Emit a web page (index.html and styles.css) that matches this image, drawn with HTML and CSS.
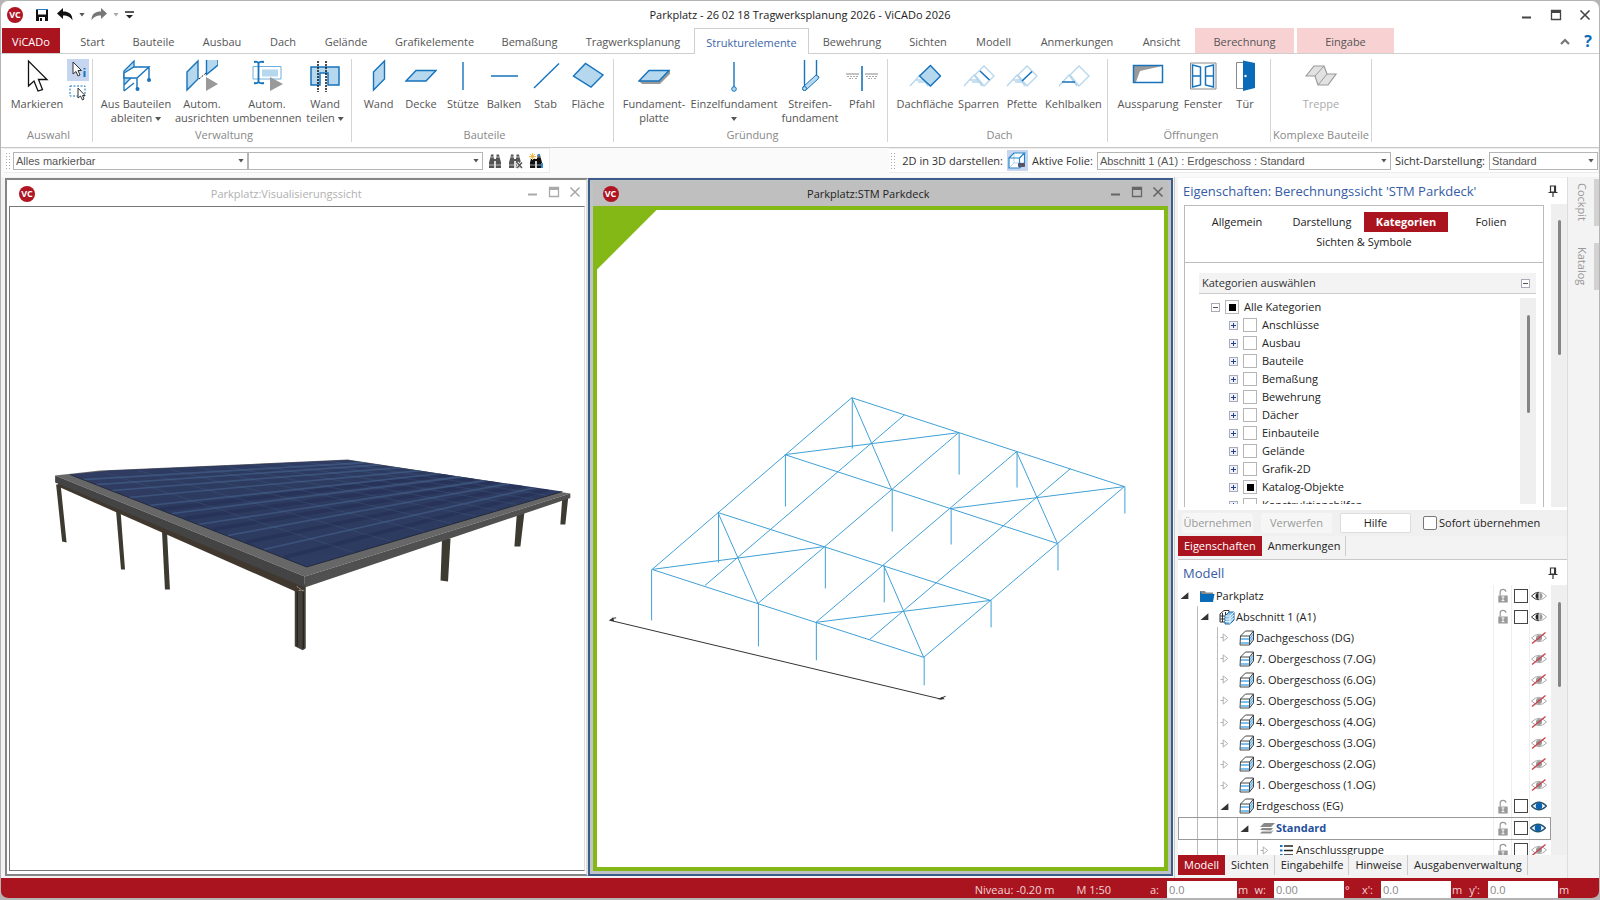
FILE: index.html
```html
<!DOCTYPE html>
<html lang="de">
<head>
<meta charset="utf-8">
<title>Parkplatz - 26 02 18 Tragwerksplanung 2026 - ViCADo 2026</title>
<link rel="stylesheet" href="styles.css">
</head>
<body>
<svg class="defs" aria-hidden="true">
  <symbol id="min" viewBox="0 0 12 12"><path d="M1 8.500H10" stroke="currentColor" stroke-width="2"/></symbol>
  <symbol id="max" viewBox="0 0 12 12"><path d="M1.500 1.500H10.500V10.500H1.500ZM1 3H11" fill="none" stroke="currentColor" stroke-width="1.300"/><path d="M1 1H11V4H1Z" fill="currentColor"/></symbol>
  <symbol id="close" viewBox="0 0 12 12"><path d="M1.500 1.500L10.500 10.500M10.500 1.500L1.500 10.500" stroke="currentColor" stroke-width="1.600"/></symbol>
  <symbol id="pin" viewBox="0 0 10 12"><path d="M2.500 1H7.500V7H2.500ZM0.500 7.500H9.500M5 7.500V12" fill="none" stroke="#333" stroke-width="1.200"/><path d="M6 1H7.500V7H6Z" fill="#333"/></symbol>
  <symbol id="lock" viewBox="0 0 12 16"><path d="M3 8V4Q3 1.500 6 1.500T9 4" fill="none" stroke="#999" stroke-width="1.300"/><rect x="1" y="8" width="10" height="7.500" fill="#999"/><path d="M4.500 9.500H7.500M6 9.500V13.500M4.500 13.500H7.500" stroke="#fff" stroke-width="1"/></symbol>
  <symbol id="eye-off" viewBox="0 0 16 14"><path d="M.5 7Q8 -.5 15.500 7Q8 14.500 .5 7Z" fill="none" stroke="#aaa"/><circle cx="8" cy="7" r="3" fill="#999"/><path d="M1 12.500L14.500 1.500" stroke="#c9414b" stroke-width="1.400"/></symbol>
  <symbol id="eye-on" viewBox="0 0 16 14"><path d="M.5 7Q8 -.5 15.500 7Q8 14.500 .5 7Z" fill="#fff" stroke="#25536f" stroke-width="1.300"/><circle cx="8" cy="7" r="3.300" fill="#0a63b0"/></symbol>
  <symbol id="eye-half" viewBox="0 0 16 14"><path d="M8 3.200Q4 3.200 .5 7Q4 10.800 8 10.800" fill="none" stroke="#333"/><path d="M8 3.200Q12 3.200 15.500 7Q12 10.800 8 10.800" fill="none" stroke="#aaa"/><path d="M7.500 4A3 3 0 0 0 7.500 10Z" fill="#222"/><path d="M8.500 4A3 3 0 0 1 8.500 10Z" fill="#999"/></symbol>
  <symbol id="floor" viewBox="0 0 16 16"><path d="M1.500 6L6.500 1H14.500L10.500 6Z" fill="#fff"/><path d="M1.500 6H10.500V15H1Z" fill="#fff"/><path d="M1.500 8H10V10H1.500ZM1.500 12H10V14H1.500Z" fill="#7cc0ef"/><path d="M10.500 6L14.500 1V10L10.500 15Z" fill="#b9def7"/><path d="M10.500 9L14.500 4M10.500 12L14.500 7" stroke="#4a9fd8" stroke-width=".8"/><path d="M1.500 6L6.500 1H14.500L10.500 6ZM1.500 6L1 15H10.500V6M10.500 15L14.500 10V1" fill="none" stroke="#333" stroke-width=".9"/></symbol>
  <symbol id="section" viewBox="0 0 16 16"><path d="M1 5L5 1.500H10V13H1Z" fill="#fff" stroke="#333"/><path d="M1 7H6M1 10H6M3.500 4V13M6.500 3V13" stroke="#333"/><path d="M6 7L10 3H15L15 11L11 15H6Z" fill="#8cc4ec" stroke="#1f6daa"/><path d="M6 7H11V15M11 7L15 3M6 10H11L15 6M6 12.500H11L15 9" fill="none" stroke="#fff" stroke-width=".8"/></symbol>
  <symbol id="open" viewBox="0 0 8 8"><path d="M7 1V7H0Z" fill="#333"/></symbol>
  <symbol id="shut" viewBox="0 0 10 10"><path d="M0 5H3M3 1L8 5L3 9Z" fill="#fff" stroke="#aaa"/></symbol>
  <symbol id="bino" viewBox="0 0 14 16"><path d="M3 1.500H5.500V4L6.200 6V15H1V9.500L2.500 4ZM8.500 1.500H11L11.500 4L13 9.500V15H7.800V6L8.500 4Z" fill="currentColor"/><path d="M5 7H9" stroke="currentColor" stroke-width="2"/><path d="M2.500 4H5.500M8.500 4H11.500M1 12H6M8 12H13" stroke="#fff" stroke-width=".6"/></symbol>
</svg>
<div class="window">
  <header class="titlebar">
    <div class="quick">
      <span class="logo">VC</span>
      <button class="bare" aria-label="Speichern"><svg width="14" height="14" viewBox="0 0 14 14"><path d="M1 1H12L13 2V13H1Z" fill="#111"/><rect x="3" y="1.500" width="8" height="5" fill="#fff"/><path d="M1 1H13V2H1Z" fill="#2a7cc0"/><rect x="4" y="9" width="6" height="4" fill="#fff"/><rect x="5" y="10" width="2" height="3" fill="#111"/></svg></button>
      <button class="bare undo" aria-label="Rückgängig"><svg width="16" height="13" viewBox="0 0 16 13"><path d="M6 0V3.500C12 3.500 15.500 6 15.500 12.500C13.500 9 11 7.500 6 7.500V11L0 5.500Z" fill="#111"/></svg><i class="caret"></i></button>
      <button class="bare redo" aria-label="Wiederholen"><svg width="16" height="13" viewBox="0 0 16 13"><path d="M10 0V3.500C4 3.500 .5 6 .5 12.500C2.500 9 5 7.500 10 7.500V11L16 5.500Z" fill="#777"/></svg><i class="caret pale"></i></button>
      <button class="bare custom" aria-label="Anpassen"><svg width="9" height="8" viewBox="0 0 9 8"><path d="M0 1H9" stroke="#222" stroke-width="1.500"/><path d="M1 4H8L4.500 7.500Z" fill="#222"/></svg></button>
    </div>
    <h1>Parkplatz - 26 02 18 Tragwerksplanung 2026 - ViCADo 2026</h1>
    <div class="winbtns main">
      <button class="bare" aria-label="Minimieren"><svg width="12" height="12"><use href="#min"/></svg></button>
      <button class="bare" aria-label="Maximieren"><svg width="12" height="12"><use href="#max"/></svg></button>
      <button class="bare" aria-label="Schließen"><svg width="12" height="12"><use href="#close"/></svg></button>
    </div>
  </header>

  <nav class="tabs">
    <button class="file">ViCADo</button><button>Start</button><button>Bauteile</button><button>Ausbau</button><button>Dach</button><button>Gelände</button><button>Grafikelemente</button><button>Bemaßung</button><button>Tragwerksplanung</button><button class="active">Strukturelemente</button><button>Bewehrung</button><button>Sichten</button><button>Modell</button><button>Anmerkungen</button><button>Ansicht</button><button class="ctx">Berechnung</button><button class="ctx last">Eingabe</button>
    <span class="help"><button class="bare" aria-label="Einklappen"><svg width="10" height="8" viewBox="0 0 10 8"><path d="M1 7L5 3L9 7" fill="none" stroke="#777" stroke-width="2.200"/></svg></button><button class="bare q">?</button></span>
  </nav>

  <section class="ribbon">
    <div class="group g1">
      <div class="items">
        <button class="tool"><svg width="32" height="34" viewBox="0 0 32 34"><path d="M7.500 2V27L13 22L17 32L21.500 30.500L17.500 20.500H26Z" fill="#fff" stroke="#111" stroke-width="1.300"/></svg>Markieren</button>
        <div class="mini">
          <button class="bare on" aria-label="Info"><svg width="22" height="22" viewBox="0 0 22 22"><path d="M6 3V15L9 12.500L11 17L13 16L11 11.500H14.500Z" fill="#fff" stroke="#333"/><path d="M17.500 12V18M17.500 9V10.500" stroke="#1673bd" stroke-width="2"/></svg></button>
          <button class="bare" aria-label="Bereich"><svg width="22" height="20" viewBox="0 0 22 20"><path d="M3 4H18V14H3Z" fill="none" stroke="#1673bd" stroke-dasharray="2 1.500"/><path d="M11 6V16L13.500 14L15.500 18L17 17L15.500 13.500H18Z" fill="#fff" stroke="#333"/></svg></button>
        </div>
      </div>
      <div class="caption">Auswahl</div>
    </div>
    <div class="group g2">
      <div class="items">
        <button class="tool"><svg width="32" height="34" viewBox="0 0 32 34"><path d="M4 32V12L14 2V16L4 26M4 32L14 24" fill="#b5d8ef" stroke="#1673bd" stroke-width="1.300"/><path d="M4 14L14 8H29L17 19H4ZM17 19V29M29 8V21" fill="#fff" stroke="#1673bd" stroke-width="1.400"/><circle cx="17.500" cy="30" r="2" fill="#1673bd"/><circle cx="29" cy="21" r="2" fill="#1673bd"/></svg>Aus Bauteilen<br><span>ableiten <i class="caret"></i></span></button>
        <button class="tool"><svg width="32" height="34" viewBox="0 0 32 34"><path d="M1 13L12 2V20L1 31ZM20.500 1V15.500L32 6V1" fill="#b5d8ef" stroke="#1673bd" stroke-width="1.400"/><path d="M13 20L20 14" stroke="#111" stroke-dasharray="2 1.500"/><path d="M20 18L32 25L20 32Z" fill="#999"/></svg>Autom.<br>ausrichten</button>
        <button class="tool"><svg width="32" height="34" viewBox="0 0 32 34"><path d="M2 7.500H30V20H2Z" fill="#fff" stroke="#6eb0dc"/><rect x="11" y="10.500" width="16" height="7" fill="#b5d8ef"/><path d="M3 3Q7.500 2 7.500 5Q7.500 2 13 3M7.500 4V22M3 24Q7.500 25 7.500 22Q7.500 25 13 24" fill="none" stroke="#1673bd" stroke-width="1.800"/><path d="M19 18L32 25L19 32Z" fill="#999"/></svg>Autom.<br>umbenennen</button>
        <button class="tool"><svg width="32" height="34" viewBox="0 0 32 34"><path d="M2 8H30V26H19V14H11V26H2Z" fill="#b5d8ef" stroke="#1673bd" stroke-width="1.500"/><path d="M9 2V33M17 2V33" stroke="#111" stroke-width="1.500" stroke-dasharray="2 1"/></svg>Wand<br><span>teilen <i class="caret"></i></span></button>
      </div>
      <div class="caption">Verwaltung</div>
    </div>
    <div class="group g3">
      <div class="items">
        <button class="tool"><svg width="32" height="34" viewBox="0 0 32 34"><path d="M10.500 13L21.500 2V20L10.500 31Z" fill="#b5d8ef" stroke="#1673bd" stroke-width="1.400"/></svg>Wand</button>
        <button class="tool"><svg width="32" height="34" viewBox="0 0 32 34"><path d="M1 22L11 11.500H31L21 22Z" fill="#b5d8ef" stroke="#1673bd" stroke-width="1.400"/></svg>Decke</button>
        <button class="tool"><svg width="32" height="34" viewBox="0 0 32 34"><path d="M16 3V31" stroke="#1673bd" stroke-width="1.400"/></svg>Stütze</button>
        <button class="tool"><svg width="32" height="34" viewBox="0 0 32 34"><path d="M3 17H30" stroke="#1673bd" stroke-width="1.400"/></svg>Balken</button>
        <button class="tool"><svg width="32" height="34" viewBox="0 0 32 34"><path d="M4 29L29 4.500" stroke="#1673bd" stroke-width="1.400"/></svg>Stab</button>
        <button class="tool"><svg width="32" height="34" viewBox="0 0 32 34"><path d="M1.500 17L13.500 4.500L31 16L19 28Z" fill="#b5d8ef" stroke="#1673bd" stroke-width="1.400"/></svg>Fläche</button>
      </div>
      <div class="caption">Bauteile</div>
    </div>
    <div class="group g4">
      <div class="items">
        <button class="tool"><svg width="32" height="34" viewBox="0 0 32 34"><path d="M1 22L4 25H22L32 15V11.500" fill="#999"/><path d="M1 22L11 11.500H31L21 22Z" fill="#b5d8ef" stroke="#1673bd" stroke-width="1.400"/></svg>Fundament-<br>platte</button>
        <button class="tool"><svg width="32" height="34" viewBox="0 0 32 34"><path d="M16 3V28" stroke="#1673bd" stroke-width="1.400"/><circle cx="16" cy="30" r="2.300" fill="#b5d8ef" stroke="#1673bd"/></svg>Einzelfundament<br><i class="caret"></i></button>
        <button class="tool"><svg width="32" height="34" viewBox="0 0 32 34"><path d="M10.500 1V28M22.500 1V18" stroke="#1673bd" stroke-width="1.400"/><path d="M9 28L22 16L25 18L24 20L12 31L9 31Z" fill="#b5d8ef" stroke="#1673bd"/><circle cx="10.500" cy="29.500" r="2" fill="#b5d8ef" stroke="#1673bd"/></svg>Streifen-<br>fundament</button>
        <button class="tool"><svg width="32" height="34" viewBox="0 0 32 34"><path d="M16 7V32" stroke="#1673bd" stroke-width="1.600"/><path d="M0 15H13M19 15H32" stroke="#888"/><path d="M1 17.500H13M20 17.500H32M3 19.500H7M9 19.500H12M22 19.500H26M28 19.500H31" stroke="#aaa" stroke-dasharray="2 1"/></svg>Pfahl</button>
      </div>
      <div class="caption">Gründung</div>
    </div>
    <div class="group g5">
      <div class="items">
        <button class="tool"><svg width="32" height="34" viewBox="0 0 32 32"><path d="M1 26L11 15L19 26M12 15L21 6L31 16L21 26ZM7 20H15M9 22H17" fill="none" stroke="#b5d6ec" stroke-width="1.300"/><path d="M10.500 16L21.500 5.500L31.500 16L21.500 26Z" fill="#b5d8ef" stroke="#1673bd" stroke-width="1.400"/></svg>Dachfläche</button>
        <button class="tool"><svg width="32" height="34" viewBox="0 0 32 32"><path d="M1 26L11 15L19 26M12 15L21 6L31 16L21 26ZM7 20H15M9 22H17" fill="none" stroke="#b5d6ec" stroke-width="1.300"/><path d="M17 11L26.500 20" stroke="#1673bd" stroke-width="1.600"/></svg>Sparren</button>
        <button class="tool"><svg width="32" height="34" viewBox="0 0 32 32"><path d="M1 26L11 15L19 26M12 15L21 6L31 16L21 26ZM7 20H15M9 22H17" fill="none" stroke="#b5d6ec" stroke-width="1.300"/><path d="M16 21L26 11.500" stroke="#1673bd" stroke-width="1.600"/></svg>Pfette</button>
        <button class="tool"><svg width="32" height="34" viewBox="0 0 32 32"><path d="M1 26L11 15L19 26M12 15L21 6L31 16L21 26Z" fill="none" stroke="#b5d6ec" stroke-width="1.300"/><path d="M4 22H17" stroke="#1673bd" stroke-width="1.600"/></svg>Kehlbalken</button>
      </div>
      <div class="caption">Dach</div>
    </div>
    <div class="group g6">
      <div class="items">
        <button class="tool"><svg width="32" height="34" viewBox="0 0 32 34"><path d="M1.500 6.500H30.500V23.500H1.500Z" fill="#fff"/><path d="M2 7H30L8 12L4 23H2Z" fill="#999"/><path d="M1.500 6.500H30.500V23.500H1.500Z" fill="none" stroke="#1673bd" stroke-width="1.500"/></svg>Aussparung</button>
        <button class="tool"><svg width="32" height="34" viewBox="0 0 32 34"><path d="M3.500 4H29V30H3.500Z" fill="#fff" stroke="#888"/><path d="M5.500 6L13.500 8V26L5.500 28ZM26.500 6L18.500 8V26L26.500 28ZM5.500 17H13.500M18.500 17H26.500" fill="none" stroke="#1673bd" stroke-width="1.500"/></svg>Fenster</button>
        <button class="tool"><svg width="32" height="34" viewBox="0 0 32 34"><path d="M14 3.500H7.500V29.500H14" fill="none" stroke="#888"/><path d="M14 1.500L26 4V29L14 32Z" fill="#0a6cb8"/><circle cx="16.500" cy="17" r="1.200" fill="#fff"/></svg>Tür</button>
      </div>
      <div class="caption">Öffnungen</div>
    </div>
    <div class="group g7">
      <div class="items">
        <button class="tool off" disabled><svg width="32" height="34" viewBox="0 0 32 34"><path d="M1 17L9 7H19L22 15H31L23 26H13L10 17Z" fill="#e2e2e2" stroke="#999" stroke-width="1.200"/><path d="M10 17L19 7M13 26L22 15" stroke="#999"/></svg>Treppe</button>
      </div>
      <div class="caption">Komplexe Bauteile</div>
    </div>
  </section>

  <section class="toolbar">
    <div class="bar left">
      <i class="grip"></i>
      <span class="combo w1"><select aria-label="Markierfilter"><option>Alles markierbar</option></select></span>
      <span class="combo w1"><select aria-label="Suche"><option></option></select></span>
      <button class="bare b" aria-label="Suchen"><svg width="14" height="16"><use href="#bino"/></svg></button>
      <button class="bare b" aria-label="Suche aufheben"><svg width="15" height="16" viewBox="0 0 15 16"><use href="#bino" width="14" height="16"/><path d="M9 9.500L14 15M14 9.500L9 15" stroke="#fff" stroke-width="3"/><path d="M9 9.500L14 15M14 9.500L9 15" stroke="#555" stroke-width="1.500"/></svg></button>
      <button class="bare b dark" aria-label="Neue Suche"><svg width="15" height="16" viewBox="0 0 15 16"><use href="#bino" width="14" height="16"/><path d="M0 0H6V6H0Z" fill="#fff"/><path d="M3.500 0V7M0 3.500H7M1 1L6 6M6 1L1 6" stroke="#eebb55"/><path d="M9 2H11M13 10V15" stroke="#2a8ad4" stroke-width="2"/></svg></button>
    </div>
    <div class="bar right">
      <i class="grip"></i>
      <span class="lbl">2D in 3D darstellen:</span>
      <button class="bare cube" aria-label="2D in 3D"><svg width="20" height="20" viewBox="0 0 20 20"><path d="M2 7L7 2H17.500V12L12.500 17H2Z" fill="#fff"/><path d="M7 2V12H17M7 12L2 17" fill="none" stroke="#b5d6ec"/><path d="M2 7H12.500V17H2ZM2 7L7 2H17.500L12.500 7M17.500 2V12L12.500 17" fill="none" stroke="#2a86c8" stroke-width="1.200"/><rect x="11" y="12" width="7" height="4" rx="1" fill="#556"/></svg></button>
      <label class="lbl" for="folie">Aktive Folie:</label>
      <span class="combo w2"><select id="folie"><option>Abschnitt 1 (A1) : Erdgeschoss : Standard</option></select></span>
      <label class="lbl" for="sicht">Sicht-Darstellung:</label>
      <span class="combo w3"><select id="sicht"><option>Standard</option></select></span>
    </div>
  </section>

  <main class="workspace">
    <article class="doc">
      <header><span class="logo">VC</span><h2>Parkplatz:Visualisierungssicht</h2>
        <div class="winbtns"><button class="bare" aria-label="Minimieren"><svg width="12" height="12"><use href="#min"/></svg></button><button class="bare" aria-label="Maximieren"><svg width="12" height="12"><use href="#max"/></svg></button><button class="bare" aria-label="Schließen"><svg width="12" height="12"><use href="#close"/></svg></button></div>
      </header>
      <div class="canvas">
        <svg viewBox="10 207 574 664" role="img" aria-label="Carport">
          <clipPath id="panels"><path d="M70 475L110 471L348 460.500L563 492L307 567.500Z"/></clipPath>
          <g fill="#3d3a32"><path d="M56 485H60.500L66.500 543L62 542ZM116 511H120.500L125 570H121ZM162 531H167L170 590H165ZM442.500 539H451L448.500 582L441 581ZM517.500 513H525L521 547H515ZM563 497H569L566 525H561Z"/></g>
          <path d="M295 585H306V649L303 651L295 647Z" fill="#45413a"/><path d="M297.500 588V647M303.500 588V649" stroke="#1e1c18"/>
          <path d="M58 483L305 585V590L298 593L58 487Z" fill="#40382e"/>
          <path d="M55 476L100 471L348 460L571 494L305 577Z" fill="#676767"/>
          <path d="M70 475L110 471L348 460.500L563 492L307 567.500Z" fill="#303c62"/>
          <g clip-path="url(#panels)">
            <path d="M264 550L536 488M228 536L510 484M198 525L486 481M172 514L463 477M149 506L442 474M129 498L421 471M112 491L401 468M96 485L383 465M83 480L365 463" stroke="#4a6e95" stroke-width="1.600" opacity=".5"/>
            <path d="M284 558L549 490M246 543L523 486M213 530L498 482M185 519L474 479M160 510L452 475" stroke="#222c50" stroke-width="4" opacity=".45"/>
            <path d="M354 553L105 473M392 542L138 471M425 532L170 470M453 524L199 468M478 517L227 467M499 511L254 465M518 505L279 464M535 500L303 462M549 496L326 461" stroke="#45628f" opacity=".3"/>
          </g>
          <path d="M70 475L307 567.500L563 492" fill="none" stroke="#222b3d"/>
          <path d="M55 476L305 577V588L55 483Z" fill="#444"/><path d="M305 577L571 494V498.500L305 588Z" fill="#505050"/>
          <path d="M297 587L304 592M299 591H305" stroke="#aaa29a" stroke-dasharray="2 1"/>
        </svg>
      </div>
    </article>

    <article class="doc current">
      <header><span class="logo">VC</span><h2>Parkplatz:STM Parkdeck</h2>
        <div class="winbtns"><button class="bare" aria-label="Minimieren"><svg width="12" height="12"><use href="#min"/></svg></button><button class="bare" aria-label="Maximieren"><svg width="12" height="12"><use href="#max"/></svg></button><button class="bare" aria-label="Schließen"><svg width="12" height="12"><use href="#close"/></svg></button></div>
      </header>
      <div class="canvas">
        <svg viewBox="596 209 568 658" role="img" aria-label="Stabmodell">
          <g fill="none" stroke="#3fa0d6">
            <path d="M651 569L851 397L1124 486L923 657ZM784 454L1057 543M717 512L990 600M757 603L958 432M815 622L1016 451M704 585L904 414M869 639L1070 468"/>
            <path d="M851 397L891 489M784 454L958 432M1016 451L1057 543M950 508L1124 486M717 512L757 603M651 569L824 546M883 565L923 657M815 622L990 600"/>
            <path d="M851.500 397V448M784.500 454V506M717.500 512V562M650.500 569V620M757.500 603V646M815.500 622V660M923.500 657V685M1124.500 486V513M1057.500 543V570M990.500 600V627M958.500 432V474M1016.500 451V487M891.500 489V531M950.500 508V544M824.500 546V588M883.500 565V602"/>
          </g>
          <path d="M609 620L941 699" stroke="#333" fill="none"/><path d="M607.500 620L612 617L613 621ZM937 699L942 696.500L944 699Z" fill="#333"/><path d="M611 618L615 617.500M940 698L945 696" stroke="#333"/>
        </svg>
        <i class="corner"></i>
      </div>
    </article>

    <aside class="side">
      <section class="props">
        <header><h2>Eigenschaften: Berechnungssicht 'STM Parkdeck'</h2><button class="bare" aria-label="Anheften"><svg width="10" height="12"><use href="#pin"/></svg></button></header>
        <div class="scroller">
          <div class="panel">
            <div class="ptabs"><button>Allgemein</button><button>Darstellung</button><button class="sel">Kategorien</button><button>Folien</button><button class="wide">Sichten &amp; Symbole</button></div>
            <div class="cats">
              <div class="cathead">Kategorien auswählen<button class="exp minus" aria-label="Einklappen"></button></div>
              <div class="catbody">
                <ul>
                  <li class="root"><button class="exp minus" aria-label="Zuklappen"></button><label><input type="checkbox" class="part">Alle Kategorien</label></li>
                  <li><button class="exp" aria-label="Aufklappen"></button><label><input type="checkbox">Anschlüsse</label></li>
                  <li><button class="exp" aria-label="Aufklappen"></button><label><input type="checkbox">Ausbau</label></li>
                  <li><button class="exp" aria-label="Aufklappen"></button><label><input type="checkbox">Bauteile</label></li>
                  <li><button class="exp" aria-label="Aufklappen"></button><label><input type="checkbox">Bemaßung</label></li>
                  <li><button class="exp" aria-label="Aufklappen"></button><label><input type="checkbox">Bewehrung</label></li>
                  <li><button class="exp" aria-label="Aufklappen"></button><label><input type="checkbox">Dächer</label></li>
                  <li><button class="exp" aria-label="Aufklappen"></button><label><input type="checkbox">Einbauteile</label></li>
                  <li><button class="exp" aria-label="Aufklappen"></button><label><input type="checkbox">Gelände</label></li>
                  <li><button class="exp" aria-label="Aufklappen"></button><label><input type="checkbox">Grafik-2D</label></li>
                  <li><button class="exp" aria-label="Aufklappen"></button><label><input type="checkbox" class="part">Katalog-Objekte</label></li>
                  <li><button class="exp" aria-label="Aufklappen"></button><label><input type="checkbox">Konstruktionshilfen</label></li>
                </ul>
                <div class="sb"><i class="t1"></i></div>
              </div>
            </div>
          </div>
          <div class="sb"><i class="t2"></i></div>
        </div>
        <div class="actions"><button disabled>Übernehmen</button><button disabled>Verwerfen</button><button>Hilfe</button><label><input type="checkbox">Sofort übernehmen</label></div>
        <nav class="btabs"><button class="sel">Eigenschaften</button><button>Anmerkungen</button></nav>
      </section>
      <section class="model">
        <header><h2>Modell</h2><button class="bare" aria-label="Anheften"><svg width="10" height="12"><use href="#pin"/></svg></button></header>
        <div class="treewrap">
          <ul class="tree">
            <li><svg class="ar"><use href="#open"/></svg><svg class="ic" viewBox="0 0 16 16"><path d="M1 3H6L7 4.500H14V7H1Z" fill="#888"/><path d="M1 14V3L3 6H15.500L14 14Z" fill="#0a6cb8"/></svg><span class="nm">Parkplatz</span><span class="c"><svg class="lk"><use href="#lock"/></svg></span><span class="c"><input type="checkbox" aria-label="Parkplatz"></span><span class="c e"><svg class="ey"><use href="#eye-half"/></svg></span></li>
            <li><i></i><svg class="ar"><use href="#open"/></svg><svg class="ic"><use href="#section"/></svg><span class="nm">Abschnitt 1 (A1)</span><span class="c"><svg class="lk"><use href="#lock"/></svg></span><span class="c"><input type="checkbox" aria-label="Abschnitt 1"></span><span class="c e"><svg class="ey"><use href="#eye-half"/></svg></span></li>
            <li><i></i><i></i><svg class="ar"><use href="#shut"/></svg><svg class="ic"><use href="#floor"/></svg><span class="nm">Dachgeschoss (DG)</span><span class="c"></span><span class="c"></span><span class="c e"><svg class="ey"><use href="#eye-off"/></svg></span></li>
            <li><i></i><i></i><svg class="ar"><use href="#shut"/></svg><svg class="ic"><use href="#floor"/></svg><span class="nm">7. Obergeschoss (7.OG)</span><span class="c"></span><span class="c"></span><span class="c e"><svg class="ey"><use href="#eye-off"/></svg></span></li>
            <li><i></i><i></i><svg class="ar"><use href="#shut"/></svg><svg class="ic"><use href="#floor"/></svg><span class="nm">6. Obergeschoss (6.OG)</span><span class="c"></span><span class="c"></span><span class="c e"><svg class="ey"><use href="#eye-off"/></svg></span></li>
            <li><i></i><i></i><svg class="ar"><use href="#shut"/></svg><svg class="ic"><use href="#floor"/></svg><span class="nm">5. Obergeschoss (5.OG)</span><span class="c"></span><span class="c"></span><span class="c e"><svg class="ey"><use href="#eye-off"/></svg></span></li>
            <li><i></i><i></i><svg class="ar"><use href="#shut"/></svg><svg class="ic"><use href="#floor"/></svg><span class="nm">4. Obergeschoss (4.OG)</span><span class="c"></span><span class="c"></span><span class="c e"><svg class="ey"><use href="#eye-off"/></svg></span></li>
            <li><i></i><i></i><svg class="ar"><use href="#shut"/></svg><svg class="ic"><use href="#floor"/></svg><span class="nm">3. Obergeschoss (3.OG)</span><span class="c"></span><span class="c"></span><span class="c e"><svg class="ey"><use href="#eye-off"/></svg></span></li>
            <li><i></i><i></i><svg class="ar"><use href="#shut"/></svg><svg class="ic"><use href="#floor"/></svg><span class="nm">2. Obergeschoss (2.OG)</span><span class="c"></span><span class="c"></span><span class="c e"><svg class="ey"><use href="#eye-off"/></svg></span></li>
            <li><i></i><i></i><svg class="ar"><use href="#shut"/></svg><svg class="ic"><use href="#floor"/></svg><span class="nm">1. Obergeschoss (1.OG)</span><span class="c"></span><span class="c"></span><span class="c e"><svg class="ey"><use href="#eye-off"/></svg></span></li>
            <li><i></i><i></i><svg class="ar"><use href="#open"/></svg><svg class="ic"><use href="#floor"/></svg><span class="nm">Erdgeschoss (EG)</span><span class="c"><svg class="lk"><use href="#lock"/></svg></span><span class="c"><input type="checkbox" aria-label="Erdgeschoss"></span><span class="c e"><svg class="ey"><use href="#eye-on"/></svg></span></li>
            <li class="cur"><i></i><i></i><i></i><svg class="ar"><use href="#open"/></svg><svg class="ic" viewBox="0 0 16 16"><path d="M1 7L5 3H16L12 7ZM1 10L3 8H14L15 7L12 10.500ZM1 13.500L3 11.500H12.500L15 9.500L12 13.500Z" fill="#888"/></svg><span class="nm">Standard</span><span class="c"><svg class="lk"><use href="#lock"/></svg></span><span class="c"><input type="checkbox" aria-label="Standard"></span><span class="c e"><svg class="ey"><use href="#eye-on"/></svg></span></li>
            <li><i></i><i></i><i></i><i></i><svg class="ar"><use href="#shut"/></svg><svg class="ic" viewBox="0 0 16 16"><path d="M5 4H14M5 8.500H14M5 13H14" stroke="#222" stroke-width="1.600"/><path d="M1 4H3.500M1 8.500H3.500M1 13H3.500" stroke="#1673bd" stroke-width="2"/></svg><span class="nm">Anschlussgruppe</span><span class="c"><svg class="lk"><use href="#lock"/></svg></span><span class="c"><input type="checkbox" aria-label="Anschlussgruppe"></span><span class="c e"><svg class="ey"><use href="#eye-off"/></svg></span></li>
          </ul>
          <div class="sb"><i class="t3"></i></div>
        </div>
        <nav class="btabs"><button class="sel">Modell</button><button>Sichten</button><button>Eingabehilfe</button><button>Hinweise</button><button>Ausgabenverwaltung</button></nav>
      </section>
    </aside>
    <nav class="strip"><button>Cockpit</button><button>Katalog</button></nav>
  </main>

  <footer class="status">
    <span class="lvl">Niveau: -0.20 m</span><span class="scale">M 1:50</span>
    <label for="fa">a:</label><input id="fa" value="0.0"><span class="u">m</span>
    <label for="fw">w:</label><input id="fw" value="0.00"><span class="u">°</span>
    <label for="fx">x':</label><input id="fx" value="0.0"><span class="u">m</span>
    <label for="fy">y':</label><input id="fy" value="0.0"><span class="u">m</span>
  </footer>
</div>
</body>
</html>
```
FILE: styles.css
```css
* { box-sizing: border-box; }
html, body { height: 100%; }
body { margin: 0; background: #b4b4b4; font: 11px/14px "Open Sans", "Noto Sans", sans-serif; color: #333; }
button, select, input { font: inherit; color: inherit; }
button { padding: 0; border: 0; background: none; white-space: nowrap; }
h1, h2, ul { margin: 0; padding: 0; font-weight: 400; list-style: none; }
svg { display: block; flex: none; }
.defs { position: absolute; width: 0; height: 0; }
.logo { display: block; width: 16px; height: 16px; border-radius: 50%; background: #b01523; color: #fff; font-size: 9px; font-weight: 700; line-height: 16px; text-align: center; }
.window { display: flex; flex-direction: column; height: 100vh; min-width: 1400px; overflow: hidden; background: #fff; border: 1px solid #b4b4b4; border-bottom-width: 2px; border-radius: 8px; }
.bare { display: flex; align-items: center; justify-content: center; }
.caret { display: inline-block; flex: none; width: 6px; height: 4px; vertical-align: middle; background: #555; clip-path: polygon(0 0, 100% 0, 50% 100%); }
.caret.pale { background: #aaa; }

.titlebar { display: grid; grid-template-columns: 1fr auto 1fr; align-items: center; height: 27px; flex: none; }
.titlebar h1 { font-size: 11px; color: #222; }
.quick { display: flex; align-items: center; gap: 12px; padding-left: 6px; }
.undo, .redo { gap: 6px; }
.undo { margin-left: -4px; }
.redo { margin-left: -6px; }
.custom { margin-left: -6px; }
.winbtns { display: flex; gap: 9px; justify-content: flex-end; color: #555; }
.winbtns.main { gap: 17px; padding-right: 8px; color: #444; }

.tabs { display: grid; grid-template-columns: 64px 53px 69px 68px 54px 72px 105px 85px 122px 115px 86px 66px 65px 102px 67px 99px 100px 1fr; height: 26px; flex: none; padding-left: 1px; border-bottom: 1px solid #cfcfcf; color: #555; }
.tabs > button { padding-top: 2px; }
.tabs .file { width: 58px; background: #a9141f; color: #fff; }
.tabs .active { margin-bottom: -1px; background: #fff; border: 1px solid #cfcfcf; border-bottom: 0; color: #3c66a8; }
.tabs .ctx { background: #f8d2d3; }
.tabs .last { margin-left: 3px; }
.help { display: flex; justify-content: flex-end; align-items: center; gap: 14px; padding-right: 7px; }
.help .q { font-size: 16px; font-weight: 700; color: #0a6cb8; }

.ribbon { display: flex; height: 94px; flex: none; padding-top: 5px; border-bottom: 1px solid #c8c8c8; color: #555; }
.group { display: flex; flex-direction: column; height: 83px; border-right: 1px solid #d5d5d5; }
.items { display: grid; flex: 1; }
.caption { padding-left: 4px; text-align: center; color: #888; }
.tool { display: block; text-align: center; align-self: start; }
.tool svg { margin: 0 auto 4px; }
.tool.off { color: #aaa; }
.g1 { width: 92px; }
.g1 .items { grid-template-columns: 60px 22px; padding-left: 6px; }
.mini { display: flex; flex-direction: column; gap: 1px; }
.mini .on { background: #c6d6f0; }
.g2 { width: 259px; }
.g2 .items { grid-template-columns: 72px 60px 70px 46px; padding-left: 7px; }
.g3 { width: 262px; }
.g3 .items { grid-template-columns: 41px 44px 40px 42px 41px 44px; padding-left: 6px; }
.g4 { width: 274px; }
.g4 .items { grid-template-columns: 68px 92px 60px 44px; padding-left: 6px; }
.g5 { width: 220px; }
.g5 .items { grid-template-columns: 62px 45px 42px 61px; padding-left: 6px; }
.g6 { width: 163px; }
.g6 .items { grid-template-columns: 68px 42px 42px; padding-left: 6px; }
.g7 { width: 101px; }
.g7 .caption { padding-left: 0; }

.toolbar { display: flex; justify-content: space-between; height: 29px; flex: none; padding: 0 0 4px 3px; background: #fafafa; }
.bar { display: flex; align-items: center; background: #fff; border: 1px solid #ececec; border-left: 0; }
.grip { width: 6px; height: 18px; margin: 0 2px 0 1px; background: radial-gradient(circle, #aaa 1px, transparent 1px) 0 0 / 3px 3px; }
.combo { position: relative; display: flex; height: 18px; }
.combo::after { content: ""; position: absolute; right: 4px; top: 7px; width: 6px; height: 4px; background: #555; clip-path: polygon(0 0, 100% 0, 50% 100%); pointer-events: none; }
.combo select { width: 100%; padding: 0 14px 0 2px; border: 1px solid #b5b5b5; border-radius: 0; background: #fff; appearance: none; font-family: "Liberation Sans", Arial, sans-serif; color: #555; }
.w1 { width: 235px; }
.w2 { width: 294px; }
.w3 { width: 109px; }
.b { margin-left: 2px; width: 19px; color: #555; }
.b.dark { color: #111; margin-right: 3px; }
.lbl { padding: 0 4px; }
.cube { width: 21px; height: 21px; background: #c6d6f0; }

.workspace { display: flex; flex: 1; min-height: 0; padding-left: 4px; background: #f3f3f3; }
.doc { display: flex; flex: 1; flex-direction: column; min-width: 0; margin: 1px 0 2px; padding: 1px 1px 3px 2px; background: #fff; border: 2px solid #858585; border-right-color: #ddd; }
.doc header { display: grid; grid-template-columns: 16px 1fr auto; align-items: center; height: 25px; padding: 0 4px 0 10px; flex: none; }
.doc h2 { padding-left: 11px; font-size: 11px; color: #b0b0b0; text-align: center; }
.doc .winbtns { color: #aaa; padding-bottom: 3px; }
.canvas { position: relative; flex: 1; min-height: 0; border: 1px solid #777; border-right-color: #ddd; background: #fff; }
.canvas svg { width: 100%; height: 100%; }
.doc.current { padding: 1px 3px 3px; background: #bfc3c8; border-color: #3c5c8c; }
.current header { background: #bfbfbf; }
.doc.current h2 { padding-left: 8px; color: #222; }
.doc.current .winbtns { color: #666; }
.current .canvas { border: 4px solid #84b816; }
.corner { position: absolute; left: 0; top: 0; width: 60px; height: 60px; background: #84b816; clip-path: polygon(0 0, 100% 0, 0 100%); }

.side { display: flex; flex-direction: column; width: 394px; flex: none; padding: 1px 0 0 3px; border-right: 1px solid #ddd; border-left: 1px solid #ccc; margin-left: 1px; }
.side header { display: flex; align-items: center; justify-content: space-between; height: 26px; padding: 0 9px 0 5px; background: #fff; flex: none; }
.side h2 { font-size: 13px; color: #355ca5; }
.props { display: flex; flex-direction: column; height: 382px; flex: none; border-bottom: 1px solid #c8c8c8; }
.scroller { display: flex; flex: 1; min-height: 0; padding-bottom: 3px; background: #fff; }
.panel { display: flex; flex: 1; flex-direction: column; min-height: 0; margin: 1px 7px 0 6px; border: 1px solid #bbb; border-bottom: 0; }
.ptabs { display: grid; grid-template-columns: 86px 84px 84px 1fr; grid-auto-rows: 20px; padding: 6px 9px 10px; border-bottom: 1px solid #bbb; color: #222; flex: none; }
.ptabs .sel { background: #a9141f; color: #fff; font-weight: 700; }
.ptabs .wide { grid-column: 1 / -1; }
.cats { display: flex; flex: 1; flex-direction: column; min-height: 0; padding: 10px 7px 3px 14px; }
.cathead { display: flex; align-items: center; justify-content: space-between; height: 21px; padding: 0 6px 0 3px; background: #f3f3f3; border-bottom: 1px solid #ccc; flex: none; }
.catbody { display: flex; flex: 1; min-height: 0; padding-top: 4px; overflow: hidden; }
.catbody ul { flex: 1; }
.catbody li { display: flex; align-items: center; gap: 5px; height: 18px; padding-left: 30px; color: #222; }
.catbody .root { padding-left: 12px; }
.catbody label { display: flex; align-items: center; gap: 5px; }
.exp { width: 9px; height: 9px; background: linear-gradient(#24408c, #24408c) center / 5px 1px no-repeat, linear-gradient(#24408c, #24408c) center / 1px 5px no-repeat, #eef2f8; border: 1px solid #aab; flex: none; }
.exp.minus { background: linear-gradient(#555, #555) center / 5px 1px no-repeat, #fff; }
input[type="checkbox"] { width: 14px; height: 14px; margin: 0; appearance: none; background: #fff; border: 1px solid #b5b5b5; flex: none; }
input.part { background: linear-gradient(#000, #000) center / 7px 7px no-repeat, #fff; }
.sb { width: 16px; background: #efefef; flex: none; }
.sb i { display: block; width: 3px; margin: 0 auto; border-radius: 2px; background: #858585; }
.t1 { height: 98px; }
.catbody .sb { padding-top: 17px; }
.scroller > .sb { padding-top: 16px; }
.t2 { height: 135px; }
.treewrap .sb { padding-top: 17px; }
.t3 { height: 85px; }

.actions { display: flex; align-items: center; gap: 8px; height: 26px; padding-left: 4px; background: #f0f0f0; color: #222; flex: none; }
.actions button { width: 71px; height: 20px; background: #fff; border: 1px solid #ddd; border-radius: 2px; }
.actions button:disabled { background: #f6f6f6; border-color: #f6f6f6; color: #999; }
.actions label { display: flex; align-items: center; gap: 2px; margin-left: 4px; white-space: nowrap; }
.actions input[type="checkbox"] { border-color: #777; border-radius: 2px; }
.btabs { display: flex; height: 23px; padding-bottom: 3px; background: #f3f3f3; color: #222; flex: none; }
.btabs button { padding: 0 5px 0 6px; border-right: 1px solid #ccc; }
.btabs .sel { padding: 0 6px; background: #a9141f; border: 0; color: #fff; }

.model { display: flex; flex: 1; flex-direction: column; min-height: 0; }
.model header { height: 25px; }
.treewrap { display: flex; flex: 1; min-height: 0; overflow: hidden; background: #fff; }
.tree { display: flex; flex: 1; flex-direction: column; height: 276px; color: #222; }
.tree li { display: flex; flex: 1; align-items: center; }
.tree li > i { align-self: stretch; width: 20px; border-right: 1px solid #bbb; }
.tree .cur { border: 1px solid #999; }
.tree .cur > i:first-child { width: 19px; }
.tree .cur .c.e { width: 21px; }
.tree .cur .nm { font-weight: 700; color: #24509c; }
.ar { width: 14px; height: 9px; margin-right: 7px; }
.ic { width: 16px; height: 16px; margin-right: 1px; }
.nm { flex: 1; white-space: nowrap; }
.c { display: flex; align-items: center; justify-content: center; align-self: stretch; width: 18px; border-left: 1px solid #eee; }
.c.e { width: 22px; padding-right: 4px; }
.lk { width: 12px; height: 15px; }
.ey { width: 16px; height: 14px; }
.tree input[type="checkbox"] { border-color: #444; }

.strip { display: flex; flex-direction: column; align-items: flex-end; gap: 17px; width: 31px; flex: none; padding-top: 2px; }
.strip button { width: 27px; height: 47px; padding-right: 2px; border-right: 5px solid #d2d2d2; writing-mode: vertical-rl; text-align: center; color: #999; }

.status { display: flex; align-items: center; height: 20px; flex: none; padding: 3px 32px 0 0; background: #a9141f; color: #f2d4d6; justify-content: flex-end; }
.status input { width: 70px; height: 17px; padding: 0 2px; border: 0; background: #fff; color: #888; }
.status label { width: 28px; padding-right: 8px; text-align: right; }
.status .u { width: 9px; padding-left: 1px; }
.lvl { margin-right: 22px; }
.scale { margin-right: 28px; }
```
